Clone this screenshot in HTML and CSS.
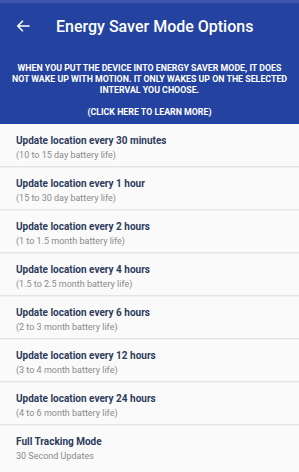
FILE: index.html
```html
<!DOCTYPE html>
<html lang="en">
<head>
  <meta charset="UTF-8">
  <meta name="viewport" content="width=device-width, initial-scale=1.0">
  <title>Energy Saver Mode Options</title>
  <link rel="stylesheet" href="styles.css">
</head>
<body>
  <div class="header">
    <div class="toolbar">
      <svg class="back" width="14" height="12" viewBox="0 0 14 12">
        <path d="M13 6H2M6.5 1.2L1.7 6l4.8 4.8" fill="none" stroke="#fff" stroke-width="1.6" stroke-linecap="round" stroke-linejoin="round"/>
      </svg>
      <div class="title">Energy Saver Mode Options</div>
    </div>
    <p class="info">When you put the device into energy saver mode, it does not wake up with motion. It only wakes up on the selected interval you choose.</p>
    <p class="info learn">(Click here to learn more)</p>
  </div>
  <div class="list">
    <div class="item">
      <div class="item-title">Update location every 30 minutes</div>
      <div class="item-sub">(10 to 15 day battery life)</div>
    </div>
    <div class="item">
      <div class="item-title">Update location every 1 hour</div>
      <div class="item-sub">(15 to 30 day battery life)</div>
    </div>
    <div class="item">
      <div class="item-title">Update location every 2 hours</div>
      <div class="item-sub">(1 to 1.5 month battery life)</div>
    </div>
    <div class="item">
      <div class="item-title">Update location every 4 hours</div>
      <div class="item-sub">(1.5 to 2.5 month battery life)</div>
    </div>
    <div class="item">
      <div class="item-title">Update location every 6 hours</div>
      <div class="item-sub">(2 to 3 month battery life)</div>
    </div>
    <div class="item">
      <div class="item-title">Update location every 12 hours</div>
      <div class="item-sub">(3 to 4 month battery life)</div>
    </div>
    <div class="item">
      <div class="item-title">Update location every 24 hours</div>
      <div class="item-sub">(4 to 6 month battery life)</div>
    </div>
    <div class="item">
      <div class="item-title">Full Tracking Mode</div>
      <div class="item-sub">30 Second Updates</div>
    </div>
  </div>
</body>
</html>
```

FILE: styles.css
```css
body {
  margin: 0;
  font-family: Roboto, "Liberation Sans", sans-serif;
  background: #fafafa;
}
.header {
  background: #2443a0;
  border-top: 3px solid #3b56aa;
  color: #fff;
  height: 121px;
}
.toolbar {
  display: flex;
  align-items: center;
  height: 46px;
  padding-left: 16px;
}
.back {
  margin-right: 26px;
}
.title {
  font-size: 16px;
  font-weight: 500;
}
.info {
  margin: 14px 9px 0;
  text-align: center;
  font-size: 8.8px;
  line-height: 11px;
  font-weight: 700;
  text-transform: uppercase;
}
.learn {
  margin-top: 11px;
}
.list {
  display: flex;
  flex-direction: column;
}
.item {
  height: 43px;
  padding: 10px 16px 0;
  box-sizing: border-box;
  border-bottom: 1px solid #e4e4e4;
  box-shadow: 0 1px 0 #efefef;
}
.item:last-child {
  border-bottom: none;
  box-shadow: none;
}
.item-title {
  font-size: 10px;
  font-weight: 700;
  color: #2d3b5c;
  line-height: 13px;
}
.item-sub {
  margin-top: 2px;
  font-size: 9px;
  color: #8a8a8a;
  line-height: 12px;
}
```
